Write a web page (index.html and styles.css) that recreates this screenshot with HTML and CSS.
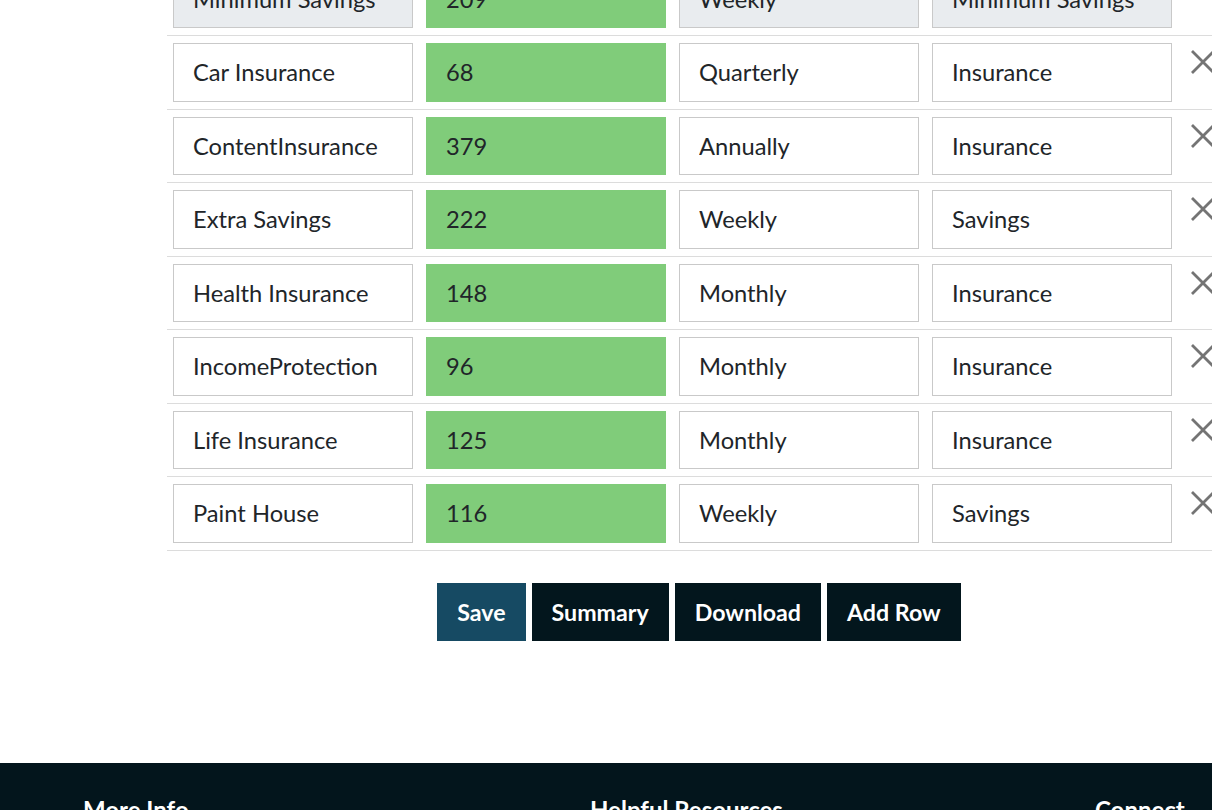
FILE: index.html
```html
<!DOCTYPE html>
<html lang="en">
<head>
  <meta charset="UTF-8">
  <meta name="viewport" content="width=device-width, initial-scale=1.0">
  <title>Budget</title>
  <link rel="stylesheet" href="styles.css">
</head>
<body>
  <div class="content">
    <div class="budget">
      <table class="budget-table">
        <tr class="locked">
          <td><input class="cell-input" value="Minimum Savings" disabled></td>
          <td><input class="cell-input amount" value="209"></td>
          <td><input class="cell-input" value="Weekly" disabled></td>
          <td><input class="cell-input" value="Minimum Savings" disabled></td>
          <td class="remove-cell"></td>
        </tr>
        <tr>
          <td><input class="cell-input" value="Car Insurance"></td>
          <td><input class="cell-input amount" value="68"></td>
          <td><input class="cell-input" value="Quarterly"></td>
          <td><input class="cell-input" value="Insurance"></td>
          <td class="remove-cell"><button class="remove-button"><svg viewBox="0 0 26 26"><path d="M2 2L24 24M24 2L2 24"/></svg></button></td>
        </tr>
        <tr>
          <td><input class="cell-input" value="ContentInsurance"></td>
          <td><input class="cell-input amount" value="379"></td>
          <td><input class="cell-input" value="Annually"></td>
          <td><input class="cell-input" value="Insurance"></td>
          <td class="remove-cell"><button class="remove-button"><svg viewBox="0 0 26 26"><path d="M2 2L24 24M24 2L2 24"/></svg></button></td>
        </tr>
        <tr>
          <td><input class="cell-input" value="Extra Savings"></td>
          <td><input class="cell-input amount" value="222"></td>
          <td><input class="cell-input" value="Weekly"></td>
          <td><input class="cell-input" value="Savings"></td>
          <td class="remove-cell"><button class="remove-button"><svg viewBox="0 0 26 26"><path d="M2 2L24 24M24 2L2 24"/></svg></button></td>
        </tr>
        <tr>
          <td><input class="cell-input" value="Health Insurance"></td>
          <td><input class="cell-input amount" value="148"></td>
          <td><input class="cell-input" value="Monthly"></td>
          <td><input class="cell-input" value="Insurance"></td>
          <td class="remove-cell"><button class="remove-button"><svg viewBox="0 0 26 26"><path d="M2 2L24 24M24 2L2 24"/></svg></button></td>
        </tr>
        <tr>
          <td><input class="cell-input" value="IncomeProtection"></td>
          <td><input class="cell-input amount" value="96"></td>
          <td><input class="cell-input" value="Monthly"></td>
          <td><input class="cell-input" value="Insurance"></td>
          <td class="remove-cell"><button class="remove-button"><svg viewBox="0 0 26 26"><path d="M2 2L24 24M24 2L2 24"/></svg></button></td>
        </tr>
        <tr>
          <td><input class="cell-input" value="Life Insurance"></td>
          <td><input class="cell-input amount" value="125"></td>
          <td><input class="cell-input" value="Monthly"></td>
          <td><input class="cell-input" value="Insurance"></td>
          <td class="remove-cell"><button class="remove-button"><svg viewBox="0 0 26 26"><path d="M2 2L24 24M24 2L2 24"/></svg></button></td>
        </tr>
        <tr>
          <td><input class="cell-input" value="Paint House"></td>
          <td><input class="cell-input amount" value="116"></td>
          <td><input class="cell-input" value="Weekly"></td>
          <td><input class="cell-input" value="Savings"></td>
          <td class="remove-cell"><button class="remove-button"><svg viewBox="0 0 26 26"><path d="M2 2L24 24M24 2L2 24"/></svg></button></td>
        </tr>
      </table>

      <div class="actions">
        <button class="action-button save">Save</button>
        <button class="action-button">Summary</button>
        <button class="action-button">Download</button>
        <button class="action-button">Add Row</button>
      </div>
    </div>
  </div>

  <footer class="footer">
    <div class="footer-col">More Info</div>
    <div class="footer-col">Helpful Resources</div>
    <div class="footer-col">Connect</div>
  </footer>
</body>
</html>
```

FILE: styles.css
```css
html, body {
  overflow-x: hidden;
}

body {
  margin: 0;
  font-family: Lato, "Open Sans", sans-serif;
  color: #212529;
  background-color: #fff;
}

.content {
  margin-top: -37.5px;
  padding-left: 166.5px;
  width: 1100px;
}

.budget {
  width: 1065px;
}

.budget-table {
  border-collapse: collapse;
}

.budget-table tr {
  border-bottom: 1px solid #dcdcdc;
}

.budget-table td {
  padding: 7px 6.5px;
  vertical-align: top;
}

.cell-input {
  box-sizing: border-box;
  width: 240px;
  height: 58.5px;
  padding: 0 19px;
  border: 1px solid #c9c9c9;
  font-family: inherit;
  font-size: 23.7px;
  color: #212529;
  background-color: #fff;
}

.cell-input:disabled {
  background-color: #e9ecef;
  color: #212529;
}

.cell-input.amount {
  background-color: #80cc7a;
  border-color: #80cc7a;
}

.remove-cell {
  width: 50px;
}

.budget-table td.remove-cell {
  padding: 13px 13px 0 11px;
}

.remove-button {
  padding: 0;
  border: none;
  background-color: transparent;
  width: 26px;
  height: 26px;
  display: block;
  cursor: pointer;
}

.remove-button svg {
  width: 26px;
  height: 26px;
  display: block;
}

.remove-button path {
  stroke: #747474;
  stroke-width: 2.8;
  fill: none;
}

.actions {
  text-align: center;
  padding-top: 32.5px;
  font-size: 0;
}

.action-button {
  font-family: inherit;
  font-size: 23.2px;
  font-weight: 700;
  color: #fff;
  background-color: #03161d;
  border: none;
  height: 58px;
  padding: 0 20px;
  margin: 0 3px;
  cursor: pointer;
}

.action-button.save {
  background-color: #164a63;
}

.footer {
  margin-top: 122px;
  background-color: #03151c;
  color: #fff;
  height: 200px;
  display: grid;
  grid-template-columns: 507px 505px auto;
  padding: 32px 0 0 83px;
  font-size: 24px;
  font-weight: 700;
}
```
